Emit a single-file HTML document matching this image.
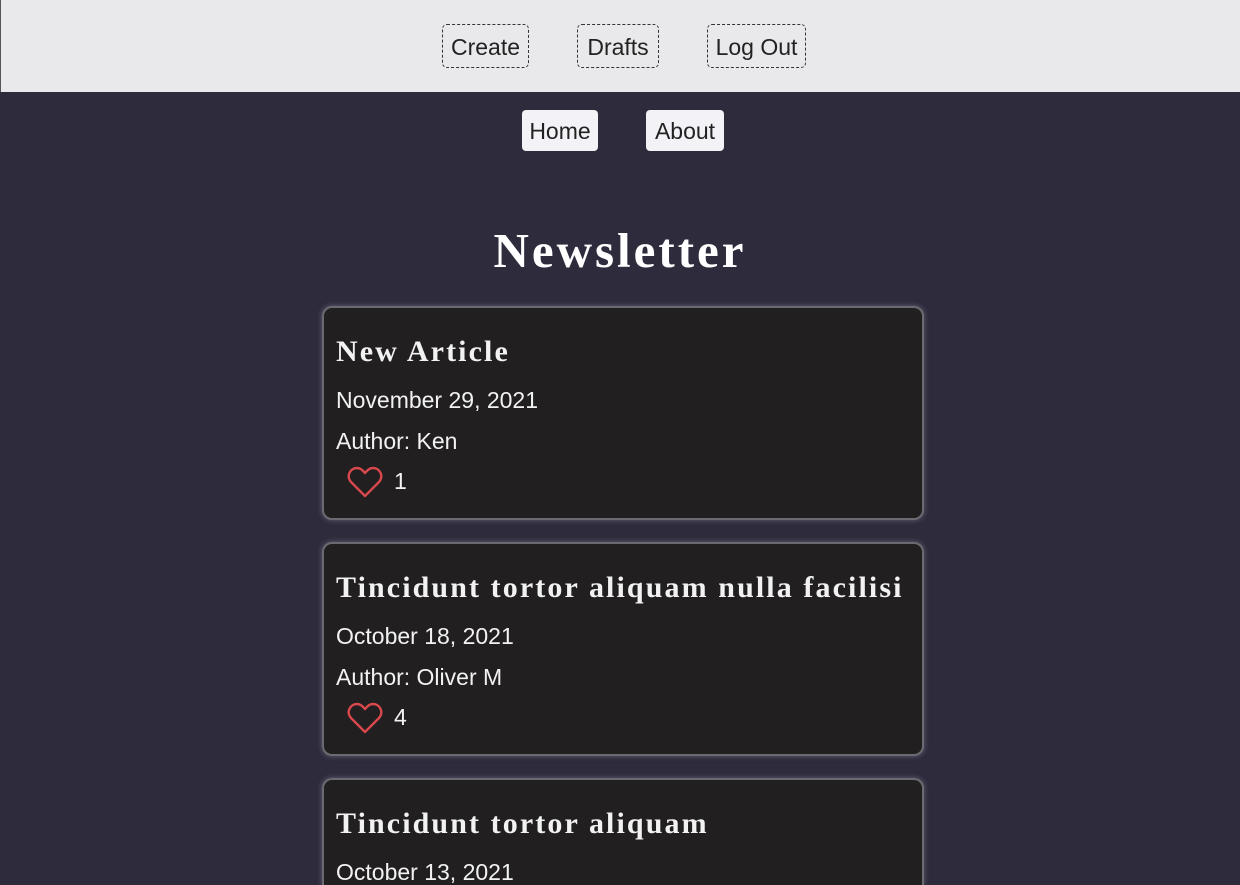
<!DOCTYPE html>
<html style="height:885px;overflow:hidden"><head><meta charset="utf-8"><style>
*{margin:0;padding:0;box-sizing:border-box}
body{width:1240px;height:885px;overflow:hidden;background:#2e2b3c;font-family:"Liberation Sans",sans-serif;position:relative}
.hdr{position:absolute;left:0;top:0;width:1240px;height:92px;background:#e9e9eb;border-left:1px solid #555}
.btn{position:absolute;top:24px;height:44px;border:1px dashed #333;border-radius:5px;font-size:23px;color:#222;line-height:44px;text-align:center}
.nav{position:absolute;top:110px;height:41px;background:#f3f2f7;border-radius:4px;font-size:23px;color:#222;line-height:42px;text-align:center}
h1{position:absolute;top:222px;left:0;width:1240px;text-align:center;font-family:"Liberation Serif",serif;font-weight:bold;font-size:49px;letter-spacing:3px;color:#fff}
.card{position:absolute;left:322px;width:602px;height:214px;background:#211f20;border:2px solid #6b6a70;border-radius:10px;box-shadow:0 0 6px rgba(200,200,220,.35);color:#f2f2f2}
.card h2{position:absolute;left:12px;top:27px;font-family:"Liberation Serif",serif;font-weight:bold;font-size:30px;white-space:nowrap;letter-spacing:2.1px}
.d{position:absolute;left:12px;font-size:23px;font-weight:300;white-space:nowrap}
.h{position:absolute;left:23px;top:157px}
.n{position:absolute;left:70px;top:160px;font-size:23px}
</style></head><body>
<div class="hdr">
<div class="btn" style="left:441px;width:87px">Create</div>
<div class="btn" style="left:576px;width:82px">Drafts</div>
<div class="btn" style="left:706px;width:99px">Log Out</div>
</div>
<div class="nav" style="left:522px;width:76px">Home</div>
<div class="nav" style="left:646px;width:78px">About</div>
<h1>Newsletter</h1>

<div class="card" style="top:306px"><h2>New Article</h2><div class="d" style="top:79px">November 29, 2021</div><div class="d" style="top:120px">Author: Ken</div>
<svg class="h" width="36" height="34" viewBox="0 0 36 34"><path d="M18 31 L4 17 C-1 11 3 3 10 3 C14 3 16 6 18 8 C20 6 22 3 26 3 C33 3 37 11 32 17 Z" fill="none" stroke="#d9484c" stroke-width="2.4" stroke-linejoin="round"/></svg><div class="n">1</div></div>

<div class="card" style="top:542px"><h2>Tincidunt tortor aliquam nulla facilisi</h2><div class="d" style="top:79px">October 18, 2021</div><div class="d" style="top:120px">Author: Oliver M</div>
<svg class="h" width="36" height="34" viewBox="0 0 36 34"><path d="M18 31 L4 17 C-1 11 3 3 10 3 C14 3 16 6 18 8 C20 6 22 3 26 3 C33 3 37 11 32 17 Z" fill="none" stroke="#d9484c" stroke-width="2.4" stroke-linejoin="round"/></svg><div class="n">4</div></div>

<div class="card" style="top:778px;height:107px;border-bottom:none;border-radius:10px 10px 0 0"><h2>Tincidunt tortor aliquam</h2><div class="d" style="top:79px">October 13, 2021</div></div>
</body></html>
